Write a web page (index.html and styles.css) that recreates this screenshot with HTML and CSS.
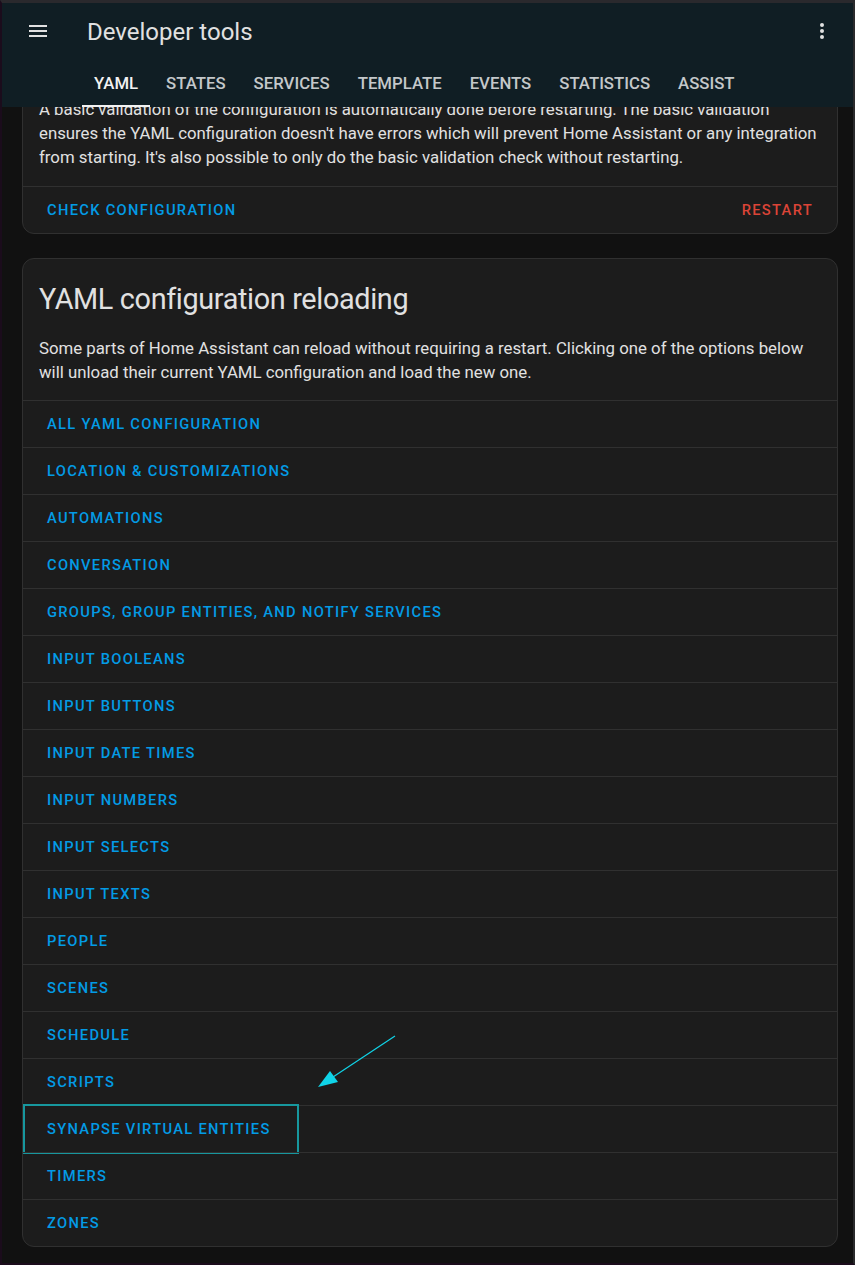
FILE: index.html
```html
<!DOCTYPE html>
<html lang="en">
<head>
<meta charset="utf-8">
<title>Developer tools</title>
<link rel="stylesheet" href="styles.css">
</head>
<body>
<div class="frame">
  <header class="app-header">
    <div class="toolbar">
      <button class="icon-btn menu" aria-label="Menu">
        <svg viewBox="0 0 24 24" width="24" height="24"><path fill="currentColor" d="M3,6H21V8H3V6M3,11H21V13H3V11M3,16H21V18H3V16Z"/></svg>
      </button>
      <div class="title">Developer tools</div>
      <button class="icon-btn more" aria-label="More">
        <svg viewBox="0 0 24 24" width="24" height="24"><path fill="currentColor" d="M12,16A2,2 0 0,1 14,18A2,2 0 0,1 12,20A2,2 0 0,1 10,18A2,2 0 0,1 12,16M12,10A2,2 0 0,1 14,12A2,2 0 0,1 12,14A2,2 0 0,1 10,12A2,2 0 0,1 12,10M12,4A2,2 0 0,1 14,6A2,2 0 0,1 12,8A2,2 0 0,1 10,6A2,2 0 0,1 12,4Z"/></svg>
      </button>
    </div>
    <nav class="tabs">
      <div class="tab active">YAML</div>
      <div class="tab">STATES</div>
      <div class="tab">SERVICES</div>
      <div class="tab">TEMPLATE</div>
      <div class="tab">EVENTS</div>
      <div class="tab">STATISTICS</div>
      <div class="tab">ASSIST</div>
    </nav>
  </header>
  <main class="scroller">
    <div class="content">
      <section class="card">
        <div class="card-content">A basic validation of the configuration is automatically done before restarting. The basic validation ensures the YAML configuration doesn't have errors which will prevent Home Assistant or any integration from starting. It's also possible to only do the basic validation check without restarting.</div>
        <div class="card-actions">
          <span class="btn">Check configuration</span>
          <span class="btn danger">Restart</span>
        </div>
      </section>
      <section class="card">
        <h1 class="card-header">YAML configuration reloading</h1>
        <div class="card-content">Some parts of Home Assistant can reload without requiring a restart. Clicking one of the options below will unload their current YAML configuration and load the new one.</div>
        <div class="row"><span class="btn">All YAML configuration</span></div>
        <div class="row"><span class="btn">Location &amp; customizations</span></div>
        <div class="row"><span class="btn">Automations</span></div>
        <div class="row"><span class="btn">Conversation</span></div>
        <div class="row"><span class="btn">Groups, group entities, and notify services</span></div>
        <div class="row"><span class="btn">Input booleans</span></div>
        <div class="row"><span class="btn">Input buttons</span></div>
        <div class="row"><span class="btn">Input date times</span></div>
        <div class="row"><span class="btn">Input numbers</span></div>
        <div class="row"><span class="btn">Input selects</span></div>
        <div class="row"><span class="btn">Input texts</span></div>
        <div class="row"><span class="btn">People</span></div>
        <div class="row"><span class="btn">Scenes</span></div>
        <div class="row"><span class="btn">Schedule</span></div>
        <div class="row"><span class="btn">Scripts</span></div>
        <div class="row highlighted"><span class="btn">Synapse virtual entities</span></div>
        <div class="row"><span class="btn">Timers</span></div>
        <div class="row"><span class="btn">Zones</span></div>
      </section>
    </div>
  </main>
  <svg class="arrow" width="855" height="1265" viewBox="0 0 855 1265" aria-hidden="true">
    <line x1="395" y1="1036" x2="333" y2="1077" stroke="#10d4e8" stroke-width="1.2"/>
    <polygon points="318,1087 330,1071 338,1082" fill="#10d4e8"/>
  </svg>
</div>
</body>
</html>
```
FILE: styles.css
```css
html, body {
  margin: 0;
  padding: 0;
  background: #111111;
}
body {
  font-family: Roboto, "Noto Sans", "Liberation Sans", sans-serif;
  color: #e1e1e1;
}
.frame {
  position: relative;
  box-sizing: border-box;
  width: 855px;
  height: 1265px;
  display: flex;
  flex-direction: column;
  border-top: 3px solid #2a292d;
  border-left: 2px solid #1b0c1c;
  border-right: 2px solid #2a2a2c;
  border-bottom: 2px solid #1b0c1c;
  overflow: hidden;
}
.app-header {
  flex: none;
  background: #101e24;
  color: #e1e1e1;
  position: relative;
  z-index: 2;
}
.toolbar {
  height: 56px;
  display: flex;
  align-items: center;
  padding: 0 19px 0 24px;
}
.icon-btn {
  border: 0;
  background: none;
  color: #e1e1e1;
  padding: 0;
  width: 24px;
  height: 24px;
  display: flex;
}
.title {
  margin-left: 37px;
  font-size: 24px;
  font-weight: 400;
  flex: 1;
  line-height: 30px;
  margin-top: 2px;
}
.tabs {
  height: 48px;
  display: flex;
  padding-left: 80px;
  gap: 4px;
}
.tab {
  position: relative;
  padding: 0 12px;
  display: flex;
  align-items: center;
  font-size: 16.75px;
  font-weight: 500;
  color: #c4c8ca;
}
.tab.active {
  color: #f2f2f2;
}
.tab.active::after {
  content: "";
  position: absolute;
  left: 0;
  right: 0;
  bottom: 0;
  height: 2px;
  background: #f2f2f2;
}
.scroller {
  flex: 1;
  overflow: hidden;
}
.content {
  margin-top: -27px;
  padding: 0 15px 0 20px;
  display: flex;
  flex-direction: column;
  gap: 24px;
}
.card {
  background: #1c1c1c;
  border: 1px solid #303030;
  border-radius: 12px;
}
.card-header {
  margin: 0;
  padding: 16px 16px 13px;
  font-size: 28.8px;
  font-weight: 400;
  line-height: 48px;
  letter-spacing: -0.012em;
  color: #e1e1e1;
}
.card-content {
  padding: 0 16px 16px;
  font-size: 16.8px;
  line-height: 24px;
}
.card > .card-content:first-child {
  padding: 16px 16px 17px;
}
.card-actions {
  border-top: 1px solid #303030;
  height: 46px;
  display: flex;
  align-items: center;
  justify-content: space-between;
  padding: 0 24px;
}
.btn {
  font-size: 14.7px;
  font-weight: 500;
  letter-spacing: 1.31px;
  text-transform: uppercase;
  color: #039be5;
}
.btn.danger {
  color: #db4437;
}
.row {
  position: relative;
  border-top: 1px solid #303030;
  height: 46px;
  display: flex;
  align-items: center;
  padding: 0 24px;
}
.row.highlighted::after {
  content: "";
  position: absolute;
  left: 0;
  top: -2px;
  width: 272px;
  height: 46px;
  border: 2px solid #17979e;
}
.arrow {
  position: absolute;
  left: -2px;
  top: -3px;
  z-index: 3;
  pointer-events: none;
}
```
